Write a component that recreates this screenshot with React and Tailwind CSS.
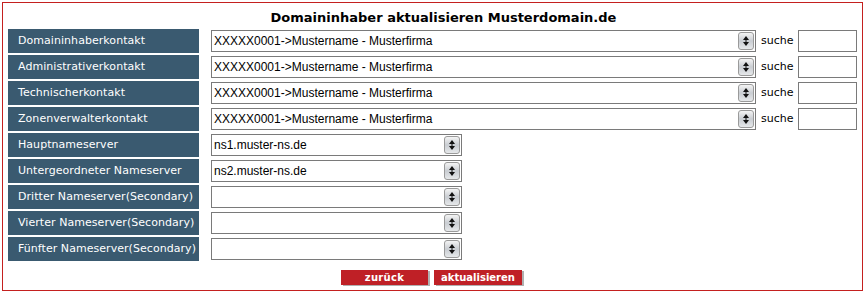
import React from 'react';

const contacts = [
  'Domaininhaberkontakt',
  'Administrativerkontakt',
  'Technischerkontakt',
  'Zonenverwalterkontakt',
];

const servers = [
  { label: 'Hauptnameserver', value: 'ns1.muster-ns.de' },
  { label: 'Untergeordneter Nameserver', value: 'ns2.muster-ns.de' },
  { label: 'Dritter Nameserver(Secondary)', value: '' },
  { label: 'Vierter Nameserver(Secondary)', value: '' },
  { label: 'Fünfter Nameserver(Secondary)', value: '' },
];

const Stepper = () => (
  <div className="w-[16px] h-[18px] rounded-[3px] border border-[#9a9a9a] bg-gradient-to-b from-[#f4f4f4] via-[#c9cdd2] to-[#e6e8ea] flex items-center justify-center">
    <svg width="8" height="12" viewBox="0 0 8 12">
      <polygon points="4,1 7,5 1,5" fill="#111" />
      <line x1="4" y1="5" x2="4" y2="7" stroke="#111" strokeWidth="1" />
      <polygon points="4,11 7,7 1,7" fill="#111" />
    </svg>
  </div>
);

const Select = ({ value, width }) => (
  <div className={`${width} h-[22px] border border-[#7a7a7a] bg-white flex items-center justify-between pl-[2px] pr-[1px]`}>
    <span className="text-[12px] text-black font-['Liberation_Sans',Arial,sans-serif] whitespace-nowrap">{value}</span>
    <Stepper />
  </div>
);

const Label = ({ children }) => (
  <div className="w-[191px] h-[24px] shrink-0 bg-[#3a5a70] text-white text-[11px] tracking-[0.05px] pl-[10px] flex items-center font-['DejaVu_Sans',Verdana,sans-serif] whitespace-nowrap overflow-hidden">
    {children}
  </div>
);

export default function App() {
  return (
    <div className="bg-white w-[866px] h-[293px] pt-[2px] pl-[2px]">
      <div className="w-[861px] h-[289px] border border-[#c4201f] font-['DejaVu_Sans',Verdana,sans-serif]">
        <h1 className="text-center text-[13px] font-bold text-black pt-[5px] pl-[22px] h-[26px]">
          Domaininhaber aktualisieren Musterdomain.de
        </h1>
        <div className="flex flex-col gap-[2px] pl-[5px]">
          {contacts.map((c) => (
            <div key={c} className="flex items-center h-[24px]">
              <Label>{c}</Label>
              <div className="ml-[12px]">
                <Select value="XXXXX0001->Mustername - Musterfirma" width="w-[545px]" />
              </div>
              <span className="ml-[5px] text-[11px] text-black">suche</span>
              <div className="ml-[4px] w-[59px] h-[22px] border border-[#7a7a7a] bg-white" />
            </div>
          ))}
          {servers.map((s) => (
            <div key={s.label} className="flex items-center h-[24px]">
              <Label>{s.label}</Label>
              <div className="ml-[12px]">
                <Select value={s.value} width="w-[251px]" />
              </div>
            </div>
          ))}
        </div>
        <div className="flex justify-center gap-[6px] mt-[9px] pr-[2px]">
          <button className="w-[87px] h-[15px] bg-[#bf2026] text-white text-[10px] font-bold leading-[15px] shadow-[2px_1px_0_#b0b0b0] tracking-[0.3px]">
            zurück
          </button>
          <button className="w-[88px] h-[15px] bg-[#bf2026] text-white text-[10px] font-bold leading-[15px] shadow-[2px_1px_0_#b0b0b0]">
            aktualisieren
          </button>
        </div>
      </div>
    </div>
  );
}
